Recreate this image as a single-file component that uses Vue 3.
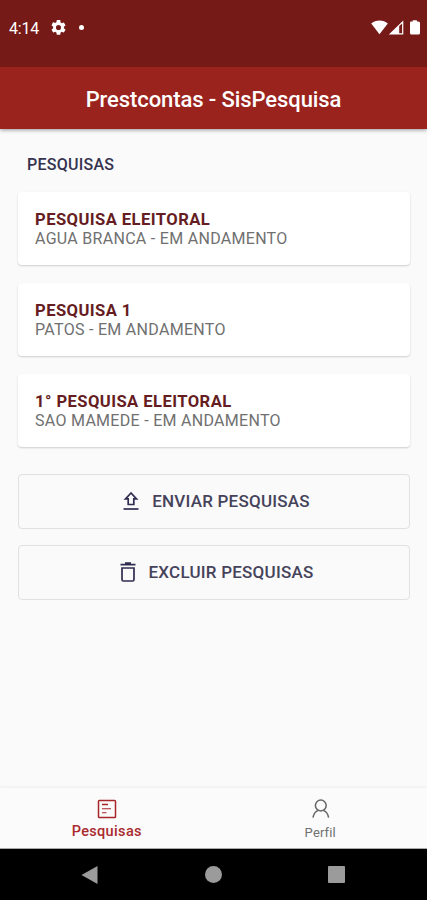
<script setup>
const surveys = [
  { title: 'PESQUISA ELEITORAL', status: 'AGUA BRANCA - EM ANDAMENTO' },
  { title: 'PESQUISA 1', status: 'PATOS - EM ANDAMENTO' },
  { title: '1° PESQUISA ELEITORAL', status: 'SAO MAMEDE - EM ANDAMENTO' },
]
</script>

<template>
  <div class="screen">
    <div class="status">
      <span class="time">4:14</span>
      <svg class="gear" viewBox="2 2 20 20" width="15" height="15">
        <path fill="#fff" fill-rule="evenodd" d="M19.14 12.94c.04-.3.06-.61.06-.94s-.02-.64-.07-.94l2.03-1.58a.49.49 0 0 0 .12-.61l-1.92-3.32a.49.49 0 0 0-.59-.22l-2.39.96a7 7 0 0 0-1.62-.94l-.36-2.54A.48.48 0 0 0 13.92 2h-3.84a.48.48 0 0 0-.47.41l-.36 2.54c-.59.24-1.13.57-1.62.94l-2.39-.96a.48.48 0 0 0-.59.22L2.74 8.87a.48.48 0 0 0 .12.61l2.03 1.58a7.5 7.5 0 0 0 0 1.88l-2.03 1.58a.49.49 0 0 0-.12.61l1.92 3.32c.12.22.37.29.59.22l2.39-.96c.5.38 1.03.7 1.62.94l.36 2.54c.05.24.24.41.48.41h3.84c.24 0 .44-.17.47-.41l.36-2.54a7 7 0 0 0 1.62-.94l2.39.96c.22.08.47 0 .59-.22l1.92-3.32a.48.48 0 0 0-.12-.61zM12 15.4a3.4 3.4 0 1 1 0-6.8 3.4 3.4 0 0 1 0 6.8z" />
      </svg>
      <i class="dot"></i>
      <svg class="signals" width="50" height="16" viewBox="0 0 50 16">
        <path fill="#fff" d="M.2 3.500C4.500-.6 12.500-.6 16.800 3.500L8.500 14.300z" />
        <path fill="#fff" fill-rule="evenodd" d="M17.800 14.500L32.300.5V14.500zM28.200 6V13.300H31.100V3.500z" />
        <path fill="#fff" d="M40 1.600H41.700V.3H45.900V1.600H47.500Q49 1.600 49 3.100V13Q49 14.500 47.500 14.500H40.500Q39 14.500 39 13V2.600Q39 1.600 40 1.600z" />
      </svg>
    </div>
    <header class="bar"><span class="bar-title">Prestcontas - SisPesquisa</span></header>
    <main class="content">
      <h2 class="section">PESQUISAS</h2>
      <div class="cards">
        <article v-for="s in surveys" :key="s.title" class="card">
          <div class="card-title">{{ s.title }}</div>
          <div class="card-status">{{ s.status }}</div>
        </article>
      </div>
      <div class="actions">
        <button class="action send">
          <svg width="16" height="20" viewBox="0 0 16 20" fill="none" stroke="#2f2c50" stroke-width="1.700">
            <path d="M8 2L2.500 7.800H5.200V13.500H10.800V7.800H13.500z" /><path d="M.5 18H15.500" />
          </svg>
          <span>ENVIAR PESQUISAS</span>
        </button>
        <button class="action remove">
          <svg width="16" height="20" viewBox="0 0 16 20" fill="none" stroke="#2f2c50" stroke-width="1.700">
            <path d="M.5 2.700H15.500M5 1.200H11" /><path d="M2 6H14V17.500Q14 19 12.500 19H3.500Q2 19 2 17.500z" />
          </svg>
          <span>EXCLUIR PESQUISAS</span>
        </button>
      </div>
    </main>
    <nav class="tabs">
      <div class="tab active">
        <svg width="20" height="20" viewBox="0 0 20 20" fill="none" stroke="#a8272b" stroke-width="1.500">
          <rect x="1.500" y="1.500" width="17" height="17" rx=".8" />
          <path d="M5 5.500H11" stroke-width="1.500" />
          <path d="M5 9.800H14M5 13.800H9.500" stroke-width="1.100" />
        </svg>
        <span>Pesquisas</span>
      </div>
      <div class="tab">
        <svg width="20" height="20" viewBox="0 0 20 20" fill="none" stroke="#666" stroke-width="1.500">
          <circle cx="10.800" cy="6.500" r="5.400" /><path d="M3 18.700Q4 12.900 8.300 11.400M13.300 11.400Q17.600 12.900 18.600 18.700" />
        </svg>
        <span>Perfil</span>
      </div>
    </nav>
    <div class="system">
      <svg width="18" height="20" viewBox="0 0 18 20"><path d="M.5 10L16.500 1V19z" fill="#9b9b9b" /></svg>
      <i class="home"></i>
      <i class="recent"></i>
    </div>
  </div>
</template>

<style>
body { margin: 0; }
</style>
<style scoped>
.screen { width: 427px; height: 900px; display: flex; flex-direction: column; background: #fafafa; font-family: Roboto, sans-serif; overflow: hidden; }
.status { box-sizing: border-box; height: 67px; background: #761a17; display: flex; align-items: flex-start; padding: 20px 6px 0 9px; color: #fff; flex: none; }
.time { font-size: 16px; line-height: 16px; width: 42px; letter-spacing: -.2px; padding-top: 1px; }
.gear { flex: none; }
.dot { width: 5px; height: 5px; border-radius: 50%; background: #fff; margin: 5px 0 0 13px; }
.signals { margin: 0 0 0 auto; }
.bar { height: 62px; flex: none; background: #9b231e; display: flex; align-items: center; justify-content: center; box-shadow: 0 1px 4px rgba(0,0,0,.4); clip-path: inset(0 0 -8px 0); z-index: 1; }
.bar-title { color: #fff; font-size: 22px; line-height: 26px; font-weight: 500; padding-top: 3px; letter-spacing: -.09px; white-space: nowrap; }
.content { flex: 1; padding: 26px 17px 0 18px; }
.section { margin: 0 0 17px 9px; font-size: 16px; line-height: 20px; font-weight: 500; color: #35334f; letter-spacing: .25px; }
.cards { display: flex; flex-direction: column; gap: 18px; }
.card { box-sizing: border-box; height: 73px; padding: 18px 17px; border-radius: 4px; background: #fff; box-shadow: 0 1px 2px rgba(0,0,0,.18); white-space: nowrap; }
.card-title { font-size: 16.6px; line-height: 19px; font-weight: 700; color: #651d22; letter-spacing: .43px; }
.card-status { font-size: 16px; line-height: 19px; color: #707070; letter-spacing: .29px; }
.actions { display: flex; flex-direction: column; gap: 16px; margin-top: 27px; }
.action { box-sizing: border-box; height: 55px; border: 1px solid #e0e1e4; border-radius: 4px; background: #fafafa; padding: 0 0 1px 5px; display: flex; align-items: center; justify-content: center; gap: 13px; font: 500 17px/20px Roboto, sans-serif; letter-spacing: .22px; color: #45435a; white-space: nowrap; }
.tabs { height: 61px; box-sizing: border-box; border-bottom: 1px solid #aaa; flex: none; background: #fbfbfb; box-shadow: 0 -1px 3px rgba(0,0,0,.06); display: grid; grid-template-columns: 1fr 1fr; }
.tab { display: flex; flex-direction: column; align-items: center; padding-top: 11px; color: #707070; font-size: 13px; line-height: 16px; gap: 6px; letter-spacing: .15px; }
.tab.active { color: #aa2b2e; font-size: 14.5px; font-weight: 500; gap: 5px; letter-spacing: .35px; }
.system { height: 51px; flex: none; background: #000; display: flex; align-items: center; justify-content: space-between; padding: 0 82px 0 81px; box-sizing: border-box; }
.home { width: 17px; height: 17px; border-radius: 50%; background: #9b9b9b; }
.recent { width: 17px; height: 17px; border-radius: 1px; background: #9b9b9b; }
</style>
